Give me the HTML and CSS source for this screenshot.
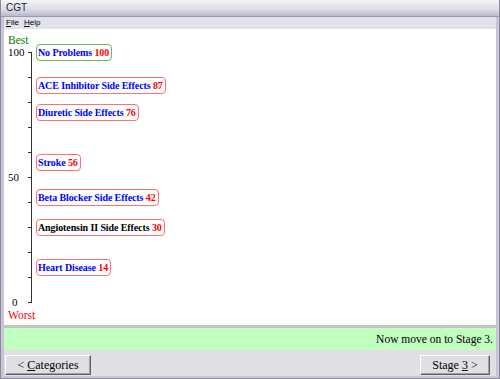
FILE: index.html
```html
<!DOCTYPE html>
<html lang="en">
<head>
    <meta charset="UTF-8">
    <title>CGT</title>
    <link rel="stylesheet" href="styles.css">
</head>
<body>
    <div class="window">
        <div class="title-bar">CGT</div>
        <div class="menu-bar">
            <span><u>F</u>ile</span>
            <span><u>H</u>elp</span>
        </div>
        <div class="chart">
            <span class="end-label best">Best</span>
            <span class="tick-label" style="--v: 100">100</span>
            <span class="tick-label" style="--v: 50">50</span>
            <span class="tick-label zero" style="--v: 0">0</span>
            <span class="end-label worst">Worst</span>
            <div class="axis"></div>

            <div class="state healthy" style="--v: 100">No Problems <b>100</b></div>
            <div class="state" style="--v: 87">ACE Inhibitor Side Effects <b>87</b></div>
            <div class="state" style="--v: 76">Diuretic Side Effects <b>76</b></div>
            <div class="state" style="--v: 56">Stroke <b>56</b></div>
            <div class="state" style="--v: 42">Beta Blocker Side Effects <b>42</b></div>
            <div class="state plain" style="--v: 30">Angiotensin II Side Effects <b>30</b></div>
            <div class="state" style="--v: 14">Heart Disease <b>14</b></div>
        </div>
        <div class="message">Now move on to Stage 3.</div>
        <div class="buttons">
            <button>&lt; <u>C</u>ategories</button>
            <button>Stage <u>3</u> &gt;</button>
        </div>
    </div>
</body>
</html>
```

FILE: styles.css
```css
body {
    margin: 0;
    font-family: 'Liberation Serif', serif;
}

.window {
    width: 500px;
    height: 379px;
    box-sizing: border-box;
    display: flex;
    flex-direction: column;
    background: #c6c6d4;
    border: 1px solid #8a8a9c;
    border-top: none;
    padding: 0 3px 2px 3px;
}

.title-bar {
    height: 16px;
    margin: 0 -3px;
    padding-left: 5px;
    font-family: 'Liberation Sans', sans-serif;
    font-size: 10px;
    line-height: 16px;
    color: #202030;
    background: linear-gradient(#f4f4f8, #dcdce6 60%, #b8b8ca);
    border-bottom: 1px solid #9a9aae;
}

.menu-bar {
    height: 12px;
    display: flex;
    gap: 5px;
    padding-left: 2px;
    font-family: 'Liberation Sans', sans-serif;
    font-size: 8px;
    line-height: 12px;
    color: #000;
    background: #e2e2ea;
}

.chart {
    position: relative;
    height: 296px;
    background: #fff;
    border-bottom: 3px solid #c4c4c4;
}

.axis {
    position: absolute;
    left: 27px;
    top: 23px;
    width: 1px;
    height: 251px;
    background: #303030;
}

/* one tick every 10 points */
.axis::before {
    content: '';
    position: absolute;
    left: -3px;
    top: 0;
    width: 3px;
    height: 251px;
    background: repeating-linear-gradient(#303030 0 1px, transparent 1px 25px);
}

.tick-label,
.end-label {
    position: absolute;
    left: 4px;
    font-size: 11px;
    line-height: 10px;
}

.tick-label {
    top: calc(18px + (100 - var(--v)) * 2.5px);
    color: #000;
}

.tick-label.zero {
    left: 8px;
}

.best {
    top: 6px;
    color: #008000;
    font-size: 11.5px;
}

.worst {
    top: 281px;
    color: #ff0000;
    font-size: 11.5px;
}

.state {
    position: absolute;
    left: 32px;
    top: calc(15px + (100 - var(--v)) * 2.5px);
    height: 15px;
    padding: 0 2px 0 1px;
    border: 1px solid #ff7070;
    border-radius: 4px;
    background: #fff;
    color: #0000ff;
    font-size: 10px;
    font-weight: bold;
    line-height: 15px;
    letter-spacing: -0.1px;
    white-space: nowrap;
}

.state b {
    color: #ff0000;
}

.state.healthy {
    border-color: #60b860;
}

.state.plain {
    color: #000;
}

.message {
    height: 22px;
    padding-right: 3px;
    background: #c0ffc0;
    font-size: 11.5px;
    line-height: 22px;
    text-align: right;
    color: #000;
}

.buttons {
    flex: 1;
    display: flex;
    justify-content: space-between;
    align-items: center;
    padding: 0 6px 0 1px;
    background: #e0dfe3;
}

.buttons button {
    width: 86px;
    height: 20px;
    margin-top: 4px;
    padding: 0;
    font-family: 'Liberation Serif', serif;
    font-size: 12px;
    color: #000;
    background: #e0dfe3;
    border: 1px solid;
    border-color: #fff #606060 #606060 #fff;
    box-shadow: inset -1px -1px 0 #a0a0a0;
}

.buttons button:last-child {
    width: 70px;
}
```
